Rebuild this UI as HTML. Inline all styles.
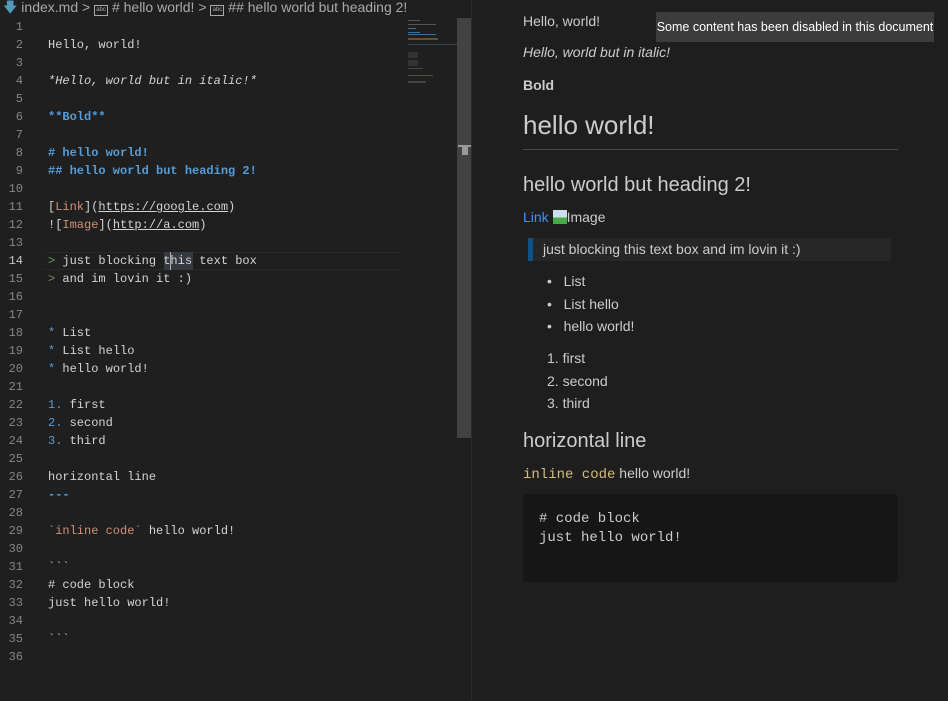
<!DOCTYPE html>
<html><head><meta charset="utf-8"><style>
*{margin:0;padding:0;box-sizing:border-box}
body{width:948px;height:701px;background:#1e1e1e;position:relative;overflow:hidden;font-family:"Liberation Sans",sans-serif}
.ed{position:absolute;left:0;top:0;width:457px;height:701px;background:#1f1f1f}
.nums{position:absolute;left:0;top:18px;width:23px;text-align:right;font:12px/18px "Liberation Mono",monospace;color:#858585}
.code{position:absolute;left:48px;top:18px;font:12px/18px "Liberation Mono",monospace;color:#d4d4d4;white-space:pre}
.b{color:#569cd6;font-weight:bold}.bl{color:#569cd6}.o{color:#ce9178}.g{color:#6a9955}.u{text-decoration:underline}
.p{position:absolute;left:523px;color:#cccccc;font-size:14px;white-space:nowrap;line-height:18px}
.ic{display:inline-block;width:14px;height:11px;border:1px solid #aaa;font-size:6px;line-height:9px;text-align:center;vertical-align:1px}
</style></head><body>
<div class="ed"></div>
<div style="position:absolute;left:0;top:0;width:457px;height:17px;font-size:14px;color:#a9a9a9;line-height:15px;white-space:nowrap">
<span style="color:#519aba;margin-left:3px">&#129095;</span> index.md &gt; <span class="ic">abc</span> # hello world! &gt; <span class="ic">abc</span> ## hello world but heading 2!</div>
<div style="position:absolute;left:44px;top:252px;width:356px;height:18px;border-top:1px solid #282828;border-bottom:1px solid #282828"></div>
<div style="position:absolute;left:164px;top:252px;width:29px;height:18px;background:#343a40"></div>
<div style="position:absolute;left:170px;top:252px;width:1px;height:18px;background:#aeafad"></div>
<div class="nums">1<br>2<br>3<br>4<br>5<br>6<br>7<br>8<br>9<br>10<br>11<br>12<br>13<br><span style="color:#c6c6c6">14</span><br>15<br>16<br>17<br>18<br>19<br>20<br>21<br>22<br>23<br>24<br>25<br>26<br>27<br>28<br>29<br>30<br>31<br>32<br>33<br>34<br>35<br>36</div>
<div class="code">
Hello, world!

<i>*Hello, world but in italic!*</i>

<span class="b">**Bold**</span>

<span class="b"># hello world!</span>
<span class="b">## hello world but heading 2!</span>

[<span class="o">Link</span>](<span class="u">https://google.com</span>)
![<span class="o">Image</span>](<span class="u">http://a.com</span>)

<span class="g">&gt;</span> just blocking this text box
<span class="g">&gt;</span> and im lovin it :)


<span class="bl">*</span> List
<span class="bl">*</span> List hello
<span class="bl">*</span> hello world!

<span class="bl">1.</span> first
<span class="bl">2.</span> second
<span class="bl">3.</span> third

horizontal line
<span class="b">---</span>

<span class="o">&#96;inline code&#96;</span> hello world!

&#96;&#96;&#96;
# code block
just hello world!

&#96;&#96;&#96;
</div>
<!-- minimap -->
<div style="position:absolute;left:408px;top:20px;width:12px;height:1px;background:#555"></div>
<div style="position:absolute;left:408px;top:24px;width:28px;height:1px;background:#555"></div>
<div style="position:absolute;left:408px;top:28px;width:8px;height:1px;background:#3f6f99"></div>
<div style="position:absolute;left:408px;top:32px;width:12px;height:1px;background:#3f6f99"></div>
<div style="position:absolute;left:408px;top:34px;width:28px;height:1px;background:#3f6f99"></div>
<div style="position:absolute;left:408px;top:38px;width:30px;height:2px;background:#554"></div>
<div style="position:absolute;left:408px;top:44px;width:49px;height:1px;background:#2a4a66"></div>
<div style="position:absolute;left:408px;top:52px;width:10px;height:6px;background:#333"></div>
<div style="position:absolute;left:408px;top:60px;width:10px;height:6px;background:#333"></div>
<div style="position:absolute;left:408px;top:68px;width:15px;height:1px;background:#444"></div>
<div style="position:absolute;left:408px;top:75px;width:25px;height:1px;background:#553"></div>
<div style="position:absolute;left:408px;top:81px;width:18px;height:2px;background:#444"></div>
<!-- scrollbar -->
<div style="position:absolute;left:457px;top:18px;width:14px;height:420px;background:#424242"></div>
<div style="position:absolute;left:458px;top:145px;width:13px;height:2px;background:#999"></div>
<div style="position:absolute;left:462px;top:147px;width:6px;height:8px;background:#999"></div>
<div style="position:absolute;left:471px;top:0;width:1px;height:701px;background:#2b2b2b"></div>
<!-- preview -->
<div class="p" style="top:12px">Hello, world!</div>
<div class="p" style="top:43px;font-style:italic">Hello, world but in italic!</div>
<div class="p" style="top:76px;font-weight:bold">Bold</div>
<div class="p" style="top:109px;font-size:26px;line-height:32px">hello world!</div>
<div style="position:absolute;left:523px;top:149px;width:375px;height:1px;background:#4a4a4a"></div>
<div class="p" style="top:172px;font-size:20px;line-height:26px">hello world but heading 2!</div>
<div class="p" style="top:208px"><span style="color:#3794ff">Link</span> <span style="display:inline-block;width:14px;height:14px;background:linear-gradient(#cde 55%,#4a4 55%);vertical-align:-2px"></span>Image</div>
<div style="position:absolute;left:528px;top:238px;width:363px;height:23px;background:#262626;border-left:5px solid #0c5289"></div>
<div class="p" style="left:543px;top:240px">just blocking this text box and im lovin it :)</div>
<div class="p" style="left:547px;top:272px">•&nbsp;&nbsp;&nbsp;List</div>
<div class="p" style="left:547px;top:295px">•&nbsp;&nbsp;&nbsp;List hello</div>
<div class="p" style="left:547px;top:317px">•&nbsp;&nbsp;&nbsp;hello world!</div>
<div class="p" style="left:547px;top:349px">1. first</div>
<div class="p" style="left:547px;top:372px">2. second</div>
<div class="p" style="left:547px;top:394px">3. third</div>
<div class="p" style="top:428px;font-size:20px;line-height:26px">horizontal line</div>
<div class="p" style="top:464px"><span style="font-family:'Liberation Mono',monospace;color:#d7ba7d">inline code</span> hello world!</div>
<div style="position:absolute;left:523px;top:494px;width:375px;height:88px;background:#161616;border-radius:3px"></div>
<div class="p" style="left:539px;top:510px;font-family:'Liberation Mono',monospace;line-height:19px">#&nbsp;code block<br>just hello world!</div>
<div style="position:absolute;left:656px;top:12px;width:278px;height:30px;background:#3c3c3c;color:#fff;font-size:12.5px;line-height:30px;text-align:center;white-space:nowrap">Some content has been disabled in this document</div>
</body></html>
